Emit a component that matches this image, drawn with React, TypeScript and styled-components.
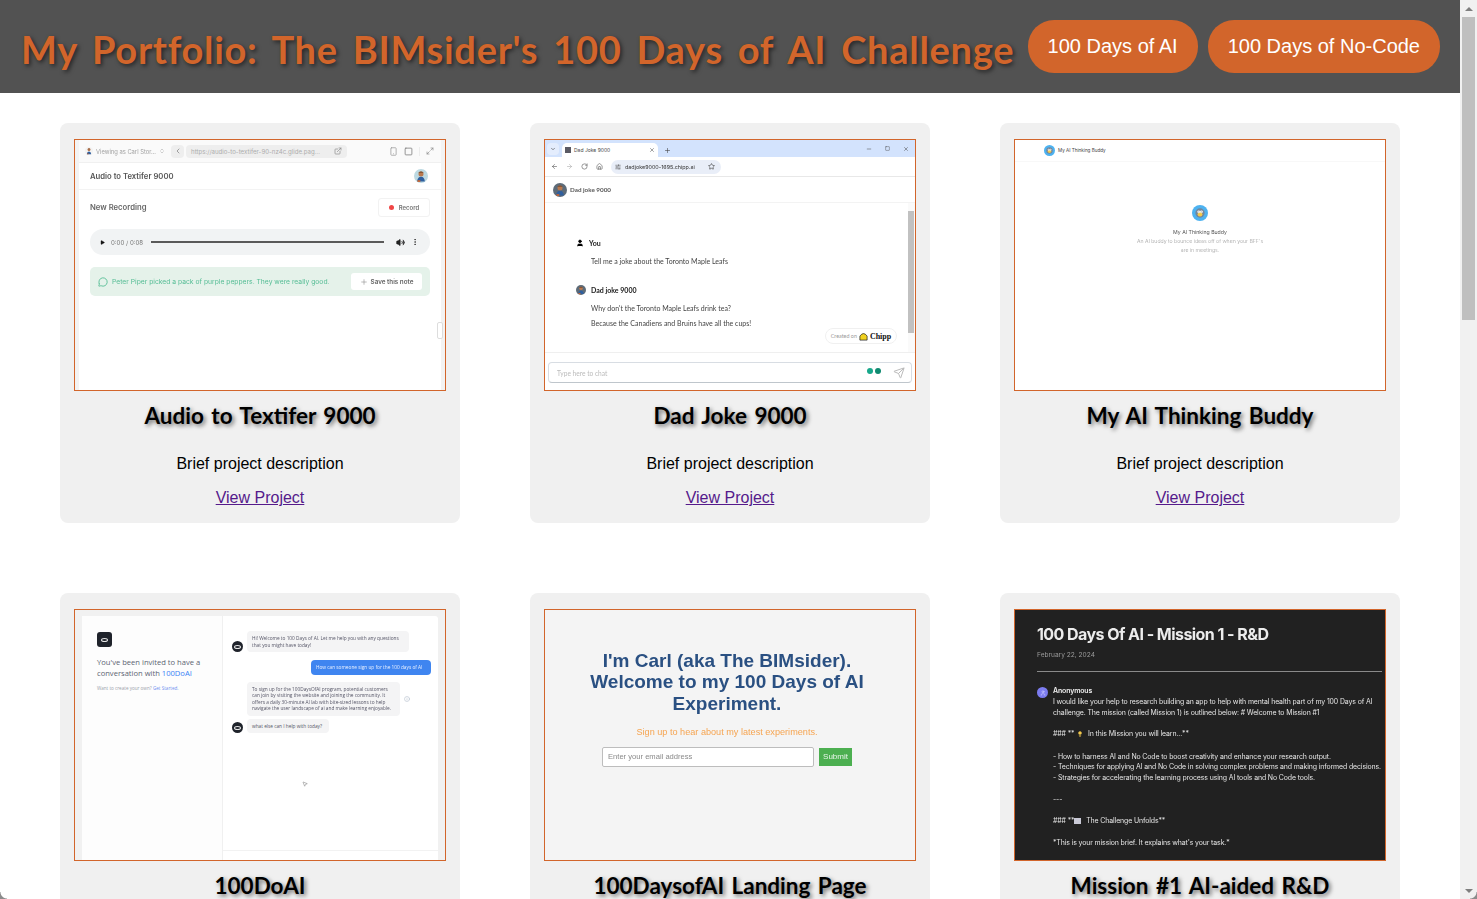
import React from "react";
import styled, { createGlobalStyle } from "styled-components";
import {
  ArrowLeft,
  ArrowRight,
  ChevronDown,
  ChevronLeft,
  ChevronsUpDown,
  ExternalLink,
  Home,
  Info,
  Lightbulb,
  Maximize2,
  MessageCircle,
  Minus,
  MoreVertical,
  MousePointer2,
  Play,
  Plus,
  RotateCw,
  Send,
  SlidersHorizontal,
  Smartphone,
  Square,
  Star,
  User,
  Volume2,
  X,
} from "lucide-react";

const ORANGE = "#d2652b";
const COMIC = `"Comic Sans MS", "Lato", "Open Sans", sans-serif`;
const ARIAL = `"Liberation Sans", Arial, sans-serif`;
const UI = `"Inter", "Liberation Sans", sans-serif`;

const GlobalStyle = createGlobalStyle`
  html, body {
    margin: 0;
    height: 100%;
    overflow: hidden;
    background: #fff;
    font-family: ${ARIAL};
  }
`;

const Shell = styled.div`
  display: flex;
  height: 899px;
  overflow: hidden;
  position: relative;
`;

const Page = styled.div`
  flex: 1;
  min-width: 0;
  overflow: hidden;
`;

const Header = styled.header`
  background: #525252;
  height: 93px;
  box-sizing: border-box;
  padding: 20px 20px 20px 21px;
  display: flex;
  align-items: center;
  justify-content: space-between;
`;

const Title = styled.h1`
  margin: 4px 0 0;
  font-family: ${COMIC};
  font-size: 38px;
  font-weight: 700;
  line-height: 46px;
  color: ${ORANGE};
  text-shadow: 2px 2px 4px rgba(0, 0, 0, 0.55);
  white-space: nowrap;
  letter-spacing: 0.72px;
  word-spacing: 5px;
`;

const Nav = styled.nav`
  display: flex;
  gap: 10px;
`;

const NavButton = styled.a`
  display: block;
  padding: 15px 20px;
  line-height: 23px;
  font-size: 20px;
  color: #fff;
  background: ${ORANGE};
  border-radius: 26px;
  white-space: nowrap;
`;

const Grid = styled.main`
  display: grid;
  grid-template-columns: repeat(3, 400px);
  gap: 70px;
  padding: 30px 60px;
`;

const Card = styled.article`
  background: #f0f0f0;
  border-radius: 8px;
  padding: 16px 14px 16px;
  text-align: center;
`;

const Thumb = styled.div<{ $bg?: string }>`
  height: 250px;
  border: 1px solid ${ORANGE};
  background: ${(p) => p.$bg || "#fff"};
  overflow: hidden;
  position: relative;
  text-align: left;
  font-family: ${UI};
  color: #444;
`;

const CardTitle = styled.h3`
  margin: 9px 0;
  font-family: ${COMIC};
  font-size: 22.5px;
  line-height: 32px;
  font-weight: 700;
  color: #000;
  text-shadow: 2px 2px 4px rgba(0, 0, 0, 0.55);
  word-spacing: 2px;
`;

const Description = styled.p`
  margin: 23px 0 16px;
  font-size: 16px;
  line-height: 18px;
  color: #000;
`;

const ProjectLink = styled.a`
  display: block;
  font-size: 16px;
  line-height: 18px;
  color: #551a8b;
  text-decoration: underline;
`;

/* scrollbar of the window, drawn since the shot has no native one */
const ScrollTrack = styled.div`
  width: 17px;
  flex: none;
  background: #f1f1f1;
  display: flex;
  flex-direction: column;
  align-items: center;
  padding: 0 2px;
  box-sizing: border-box;
`;

const ScrollArrow = styled.div<{ $down?: boolean }>`
  height: 17px;
  flex: none;
  display: flex;
  align-items: center;
  justify-content: center;
  margin-top: ${(p) => (p.$down ? "auto" : 0)};

  &::before {
    content: "";
    border-left: 4px solid transparent;
    border-right: 4px solid transparent;
    border-${(p) => (p.$down ? "top" : "bottom")}: 4px solid #7f7f7f;
  }
`;

const ScrollThumb = styled.div`
  width: 13px;
  height: 303px;
  background: #bfbfbf;
`;

const WindowCorner = styled.div<{ $right?: boolean }>`
  position: absolute;
  bottom: 0;
  ${(p) => (p.$right ? "right: 0" : "left: 0")};
  width: 7px;
  height: 7px;
  background: radial-gradient(
    circle at ${(p) => (p.$right ? "0 0" : "100% 0")},
    transparent 6px,
    #8c8c8c 7px
  );
`;

/* thumbnails: shared soft look of a scaled-down screenshot */
const Soft = styled.div<{ $amount?: number }>`
  height: 100%;
  filter: blur(${(p) => p.$amount ?? 0.35}px);
`;

const Avatar = ({ size, bg = "#9cc7d8" }: { size: number; bg?: string }) => (
  <svg width={size} height={size} viewBox="0 0 20 20" style={{ flex: "none" }}>
    <circle cx="10" cy="10" r="10" fill={bg} />
    <circle cx="10" cy="7" r="3.6" fill="#b9794f" />
    <path d="M6 5.5 Q10 1.5 14 5.5 Z" fill="#7a4a2a" />
    <path d="M4.5 18 Q5 11 10 11 Q15 11 15.5 18 Z" fill="#2f5f9e" />
    <path d="M5 16h4v2.4H5z" fill="#d2652b" />
  </svg>
);

/* ---- Audio to Textifer ---- */
const AudioFrame = styled.div`
  height: 100%;
  margin: 0 4px;
  background: #fff;
  box-shadow: 0 0 0 4px #f3f3f3;
`;

const AudioBar = styled.div`
  height: 23px;
  background: #fafafa;
  border-bottom: 1px solid #f0f0f0;
  box-sizing: border-box;
  display: flex;
  align-items: center;
  padding: 0 7px 0 6px;
  font-size: 5.8px;
  color: #a2a2a2;
  gap: 3px;
`;

const BackPill = styled.div`
  width: 13px;
  height: 13px;
  margin-left: 3px;
  border-radius: 4px;
  background: #eeeeee;
  display: flex;
  align-items: center;
  justify-content: center;
`;

const UrlPill = styled.div`
  width: 161px;
  height: 13px;
  margin-left: -1px;
  padding: 0 5px;
  box-sizing: border-box;
  border-radius: 4px;
  background: #eeeeee;
  display: flex;
  align-items: center;
  justify-content: space-between;
  color: #adadad;
  font-size: 6.1px;
  white-space: nowrap;
`;

const BarIcons = styled.div`
  margin-left: auto;
  display: flex;
  align-items: center;
  gap: 6px;
`;

const BarDivider = styled.span`
  width: 1px;
  height: 9px;
  background: #ececec;
`;

const AudioAppTitle = styled.div`
  height: 27px;
  border-bottom: 1px solid #f3f3f3;
  box-sizing: border-box;
  padding: 0 13px 0 11px;
  display: flex;
  align-items: center;
  justify-content: space-between;
  font-size: 7.7px;
  font-weight: 600;
  color: #555;
`;

const RecordingRow = styled.div`
  display: flex;
  align-items: center;
  justify-content: space-between;
  padding: 8px 11px 0;
  font-size: 7.7px;
  font-weight: 600;
  color: #666;
`;

const RecordButton = styled.div`
  width: 52px;
  height: 19px;
  box-sizing: border-box;
  border: 1px solid #f2f2f2;
  border-radius: 3px;
  display: flex;
  align-items: center;
  justify-content: center;
  gap: 5px;
  font-size: 6px;
  color: #777;

  &::before {
    content: "";
    width: 5px;
    height: 5px;
    border-radius: 50%;
    background: #f04646;
  }
`;

const Player = styled.div`
  height: 26px;
  margin: 12px 11px 0;
  padding: 0 11px 0 10px;
  border-radius: 13px;
  background: #f1f3f4;
  display: flex;
  align-items: center;
  gap: 6px;
  font-size: 6.1px;
  color: #777;
`;

const PlayerTrack = styled.div`
  flex: 1;
  height: 1.6px;
  margin: 0 6px 0 2px;
  background: #5a5a5a;
`;

const NoteRow = styled.div`
  height: 29px;
  margin: 12px 11px 0;
  padding: 0 8px;
  border-radius: 5px;
  background: #e5f2ea;
  display: flex;
  align-items: center;
  gap: 3px;
  font-size: 6.75px;
  color: #55bd95;
  white-space: nowrap;
`;

const SaveNote = styled.div`
  margin-left: auto;
  width: 71px;
  height: 17px;
  flex: none;
  border-radius: 3px;
  background: #fff;
  display: flex;
  align-items: center;
  justify-content: center;
  gap: 3px;
  font-size: 6.3px;
  font-weight: 600;
  color: #666;
`;

const ResizeHandle = styled.div`
  position: absolute;
  right: 2px;
  top: 182px;
  width: 4px;
  height: 15px;
  border-radius: 2px;
  background: #fff;
  border: 0.5px solid #ddd;
`;

const AudioThumb = () => (
  <Soft>
    <AudioFrame>
      <AudioBar>
        <Avatar size={8} bg="#f3f3f3" />
        <span>Viewing as Carl Stor...</span>
        <ChevronsUpDown size={6} />
        <BackPill>
          <ChevronLeft size={8} color="#777" />
        </BackPill>
        <UrlPill>
          https://audio-to-textifer-90-nz4c.glide.pag...
          <ExternalLink size={8} color="#888" />
        </UrlPill>
        <BarIcons>
          <Smartphone size={9} color="#9a9a9a" />
          <Square size={9} color="#777" />
          <BarDivider />
          <Maximize2 size={8} color="#888" />
        </BarIcons>
      </AudioBar>
      <AudioAppTitle>
        Audio to Textifer 9000
        <Avatar size={14} bg="#bcd9e2" />
      </AudioAppTitle>
      <RecordingRow>
        New Recording
        <RecordButton>Record</RecordButton>
      </RecordingRow>
      <Player>
        <Play size={5} fill="#111" color="#111" />
        <span>0:00 / 0:08</span>
        <PlayerTrack />
        <Volume2 size={9} color="#222" fill="#222" />
        <MoreVertical size={8} color="#222" />
      </Player>
      <NoteRow>
        <MessageCircle size={10} color="#4cbb8f" style={{ marginRight: 1, flex: "none" }} />
        Peter Piper picked a pack of purple peppers. They were really good.
        <SaveNote>
          <Plus size={8} color="#999" />
          Save this note
        </SaveNote>
      </NoteRow>
    </AudioFrame>
    <ResizeHandle />
  </Soft>
);

/* ---- Dad Joke ---- */
const TabStrip = styled.div`
  height: 17px;
  background: #d3e3fd;
  display: flex;
  align-items: flex-end;
  font-size: 5px;
  color: #444;
  padding-left: 2px;
`;

const TabMenu = styled.div`
  width: 12px;
  height: 12px;
  margin: 0 3px 2px 0;
  border-radius: 4px;
  background: #e4edfd;
  display: flex;
  align-items: center;
  justify-content: center;
`;

const Tab = styled.div`
  width: 96px;
  height: 14px;
  box-sizing: border-box;
  padding: 0 3px;
  border-radius: 5px 5px 0 0;
  background: #fff;
  display: flex;
  align-items: center;
  gap: 3px;

  & > svg:last-child {
    margin-left: auto;
  }
`;

const Favicon = styled.span`
  width: 6px;
  height: 6px;
  background: #5a5a64;
`;

const WindowButtons = styled.div`
  margin-left: auto;
  display: flex;
  align-self: center;
  gap: 13px;
  padding-right: 6px;
`;

const ChromeBar = styled.div`
  height: 20px;
  box-sizing: border-box;
  border-bottom: 1px solid #e8e8e8;
  display: flex;
  align-items: center;
  gap: 8px;
  padding-left: 6px;
`;

const OmniBox = styled.div`
  width: 110px;
  height: 14px;
  padding: 0 6px 0 4px;
  box-sizing: border-box;
  border-radius: 7px;
  background: #e9eef8;
  display: flex;
  align-items: center;
  gap: 4px;
  font-size: 5.4px;
  color: #333;
  white-space: nowrap;

  & > svg:last-child {
    margin-left: auto;
  }
`;

const ChatHeader = styled.div`
  height: 26px;
  border-bottom: 1px solid #f3f3f3;
  box-sizing: border-box;
  display: flex;
  align-items: center;
  gap: 3px;
  padding-left: 8px;
  font-family: "Lato", sans-serif;
  font-size: 6.3px;
  font-weight: 700;
  color: #555;
`;

const ChatMiddle = styled.div`
  height: 150px;
  display: flex;
  border-bottom: 1px solid #efefef;
  box-sizing: border-box;
`;

const Transcript = styled.div`
  flex: 1;
  padding: 35px 0 0 31px;
  font-family: "Lato", sans-serif;
  font-size: 7px;
  color: #444;
`;

const Speaker = styled.div<{ $gap?: number }>`
  display: flex;
  align-items: center;
  gap: 5px;
  font-weight: 700;
  color: #222;
  height: 10px;
  margin-bottom: 9px;
  margin-top: ${(p) => p.$gap ?? 0}px;
`;

const Line = styled.div`
  height: 8px;
  line-height: 8px;
  margin: 0 0 7px 15px;
`;

const MiniScroll = styled.div`
  width: 7px;
  display: flex;
  flex-direction: column;
  padding: 8px 1px 7px 0;
  box-sizing: border-box;
  background: #fafafa;
`;

const MiniThumb = styled.div`
  height: 122px;
  background: #c1c1c1;
`;

const ChippBadge = styled.div`
  position: absolute;
  left: 280px;
  top: 188px;
  width: 72px;
  height: 16px;
  box-sizing: border-box;
  border: 1px solid #f0f0f0;
  border-radius: 8px;
  background: #fff;
  display: flex;
  align-items: center;
  justify-content: center;
  gap: 2px;
  font-family: "Lato", sans-serif;
  font-size: 5.4px;
  color: #999;

  & b {
    font-family: "Liberation Serif", serif;
    font-size: 8px;
    color: #111;
  }
`;

const ChatInput = styled.div`
  margin: 9px 3px 0;
  height: 21px;
  box-sizing: border-box;
  border: 1px solid #d8dde3;
  border-bottom-color: #bfc6cc;
  border-radius: 4px;
  padding: 0 6px 0 8px;
  display: flex;
  align-items: center;
  font-family: "Lato", sans-serif;
  font-size: 6.6px;
  color: #bbb;
`;

const GrammarDot = styled.span<{ $color: string; $first?: boolean }>`
  width: 6px;
  height: 6px;
  margin: -3px 0 0 ${(p) => (p.$first ? "auto" : "2px")};
  border-radius: 50%;
  background: ${(p) => p.$color};
`;

const DadJokeThumb = () => (
  <Soft>
    <TabStrip>
      <TabMenu>
        <ChevronDown size={6} color="#222" />
      </TabMenu>
      <Tab>
        <Favicon />
        Dad Joke 9000
        <X size={6} color="#444" />
      </Tab>
      <Plus size={7} color="#444" style={{ margin: "0 0 3px 6px" }} />
      <WindowButtons>
        <Minus size={6} color="#444" />
        <Square size={5} color="#444" />
        <X size={6} color="#444" />
      </WindowButtons>
    </TabStrip>
    <ChromeBar>
      <ArrowLeft size={7} color="#555" />
      <ArrowRight size={7} color="#aaa" />
      <RotateCw size={7} color="#555" />
      <Home size={7} color="#555" />
      <OmniBox>
        <SlidersHorizontal size={6} color="#444" />
        dadjoke9000-1695.chipp.ai
        <Star size={7} color="#333" />
      </OmniBox>
    </ChromeBar>
    <ChatHeader>
      <Avatar size={14} bg="#5d6b78" />
      Dad joke 9000
    </ChatHeader>
    <ChatMiddle>
      <Transcript>
        <Speaker>
          <User size={8} color="#000" fill="#000" />
          You
        </Speaker>
        <Line>Tell me a joke about the Toronto Maple Leafs</Line>
        <Speaker $gap={20}>
          <Avatar size={10} bg="#5d6b78" />
          Dad joke 9000
        </Speaker>
        <Line>Why don't the Toronto Maple Leafs drink tea?</Line>
        <Line>Because the Canadiens and Bruins have all the cups!</Line>
      </Transcript>
      <MiniScroll>
        <MiniThumb />
      </MiniScroll>
    </ChatMiddle>
    <ChippBadge>
      Created on
      <svg width="9" height="9" viewBox="0 0 10 10">
        <path d="M1 4.5 Q5 -1 9 4.5 L9 9 L1 9 Z" fill="#f1d21f" stroke="#222" strokeWidth="0.8" />
      </svg>
      <b>Chipp</b>
    </ChippBadge>
    <ChatInput>
      Type here to chat
      <GrammarDot $color="#18a88b" $first />
      <GrammarDot $color="#0f8a70" />
      <Send size={12} color="#bbb" style={{ marginLeft: 12 }} />
    </ChatInput>
  </Soft>
);

/* ---- AI Thinking Buddy ---- */
const BuddyHeader = styled.div`
  height: 22px;
  background: #fff;
  border-bottom: 1px solid #f8f8f8;
  box-sizing: border-box;
  padding-left: 29px;
  display: flex;
  align-items: center;
  gap: 3px;
  font-size: 4.6px;
  color: #444;
`;

const BuddyLogo = ({ size }: { size: number }) => (
  <svg width={size} height={size} viewBox="0 0 20 20" style={{ flex: "none" }}>
    <circle cx="10" cy="10" r="10" fill="#4db2f0" />
    <circle cx="10" cy="10" r="5.8" fill="#74869a" />
    <circle cx="10" cy="11.5" r="3" fill="#f2c94c" />
    <circle cx="8.4" cy="8.5" r="1.7" fill="#fff" />
    <circle cx="11.8" cy="8.5" r="1.7" fill="#fff" />
    <circle cx="8.6" cy="8.6" r="0.6" fill="#222" />
    <circle cx="11.6" cy="8.6" r="0.6" fill="#222" />
  </svg>
);

const BuddyCenter = styled.div`
  display: flex;
  flex-direction: column;
  align-items: center;
  padding-top: 43px;
  font-size: 5.2px;
  color: #555;
  text-align: center;
`;

const BuddyName = styled.div`
  margin-top: 7px;
  height: 9px;
  line-height: 9px;
`;

const BuddyBlurb = styled.div`
  width: 132px;
  font-size: 5.2px;
  font-weight: 300;
  line-height: 8.6px;
  color: #a0a0a0;
`;

const BuddyThumb = () => (
  <Soft $amount={0.25}>
    <BuddyHeader>
      <BuddyLogo size={11} />
      My AI Thinking Buddy
    </BuddyHeader>
    <BuddyCenter>
      <BuddyLogo size={16} />
      <BuddyName>My AI Thinking Buddy</BuddyName>
      <BuddyBlurb>An AI buddy to bounce ideas off of when your BFF's are in meetings.</BuddyBlurb>
    </BuddyCenter>
  </Soft>
);

/* ---- 100DoAI ---- */
const DoAIWindow = styled.div`
  display: flex;
  height: 100%;
  margin: 6px 7px 0;
  background: #fff;
  border-radius: 3px 3px 0 0;
  font-family: "Open Sans", sans-serif;
`;

const InvitePane = styled.div`
  width: 141px;
  box-sizing: border-box;
  padding: 16px 0 0 15px;
  background: #fdfdfd;
  border-right: 1px solid #f0f0f0;
  color: #5c6472;
`;

const DoAILogo = styled.div`
  width: 15px;
  height: 15px;
  border-radius: 3px;
  background: #1f232b;
  display: flex;
  align-items: center;
  justify-content: center;
  margin-bottom: 10px;
`;

const InviteText = styled.div`
  width: 118px;
  font-size: 7.6px;
  line-height: 11px;

  & b {
    font-weight: 400;
    color: #3b82f6;
  }
`;

const InviteSmall = styled.div`
  margin-top: 6px;
  font-size: 4.6px;
  line-height: 6px;
  color: #9aa1ab;
  white-space: nowrap;

  & b {
    font-weight: 400;
    color: #6d8ff0;
  }
`;

const ConversationPane = styled.div`
  flex: 1;
  position: relative;
  padding: 15px 7px 0 9px;
  font-size: 4.75px;
  line-height: 6.5px;
  color: #556;
`;

const MessageRow = styled.div<{ $mine?: boolean; $gap?: number }>`
  display: flex;
  align-items: flex-end;
  gap: 4px;
  justify-content: ${(p) => (p.$mine ? "flex-end" : "flex-start")};
  margin-top: ${(p) => p.$gap ?? 0}px;
`;

const Bubble = styled.div<{ $width: number; $mine?: boolean; $indent?: boolean; $single?: boolean }>`
  width: ${(p) => p.$width}px;
  box-sizing: border-box;
  padding: 4px 5px;
  margin-left: ${(p) => (p.$indent ? 15 : 0)}px;
  border-radius: 4px;
  background: ${(p) => (p.$mine ? "#3f85f0" : "#f4f4f5")};
  color: ${(p) => (p.$mine ? "#e8f0ff" : "#556")};
  white-space: ${(p) => (p.$mine || p.$single ? "nowrap" : "normal")};
`;

const Dot = styled.div`
  width: 11px;
  height: 11px;
  flex: none;
  border-radius: 50%;
  background: #1f232b;
  display: flex;
  align-items: center;
  justify-content: center;
`;

const EyeMark = styled.span`
  width: 7px;
  height: 4px;
  border: 0.7px solid #e8e8e8;
  border-radius: 50%;
  box-sizing: border-box;
`;

const ComposerLine = styled.div`
  position: absolute;
  left: 0;
  right: 0;
  top: 234px;
  border-top: 1px solid #f2f2f2;
`;

const CursorMark = styled.div`
  position: absolute;
  left: 79px;
  top: 165px;
`;

const DoAIThumb = () => (
  <Soft $amount={0.3}>
    <DoAIWindow>
      <InvitePane>
        <DoAILogo>
          <EyeMark />
        </DoAILogo>
        <InviteText>
          You've been invited to have a conversation with <b>100DoAI</b>
        </InviteText>
        <InviteSmall>
          Want to create your own? <b>Get Started.</b>
        </InviteSmall>
      </InvitePane>
      <ConversationPane>
        <MessageRow>
          <Dot>
            <EyeMark />
          </Dot>
          <Bubble $width={162}>
            Hi! Welcome to 100 Days of AI. Let me help you with any questions that you might have today!
          </Bubble>
        </MessageRow>
        <MessageRow $mine $gap={8}>
          <Bubble $width={120} $mine>
            How can someone sign up for the 100 days of AI
          </Bubble>
        </MessageRow>
        <MessageRow $gap={7}>
          <Bubble $width={153} $indent>
            To sign up for the 100DaysOfAI program, potential customers can join by visiting the website and joining the community. It offers a daily 30-minute AI lab with bite-sized lessons to help navigate the user landscape of ai and make learning enjoyable.
          </Bubble>
          <Info size={6} color="#a9b4c4" style={{ alignSelf: "center" }} />
        </MessageRow>
        <MessageRow $gap={3}>
          <Dot>
            <EyeMark />
          </Dot>
          <Bubble $width={82} $single>
            what else can I help with today?
          </Bubble>
        </MessageRow>
        <CursorMark>
          <MousePointer2 size={6} color="#777" fill="#fff" />
        </CursorMark>
        <ComposerLine />
      </ConversationPane>
    </DoAIWindow>
  </Soft>
);

/* ---- Landing page ---- */
const Landing = styled.div`
  height: 100%;
  display: flex;
  flex-direction: column;
  align-items: center;
  padding: 40px 6px 0 0;
  box-sizing: border-box;
  font-family: ${ARIAL};
`;

const LandingHead = styled.div`
  width: 290px;
  font-size: 19px;
  line-height: 21.4px;
  font-weight: 700;
  color: #2a5082;
  text-align: center;
`;

const LandingSub = styled.div`
  margin-top: 12px;
  font-size: 9.15px;
  line-height: 12px;
  color: #f6a552;
`;

const LandingForm = styled.div`
  display: flex;
  align-items: center;
  gap: 5px;
  margin-top: 9px;
`;

const EmailBox = styled.div`
  width: 212px;
  height: 20px;
  box-sizing: border-box;
  padding-left: 5px;
  background: #fff;
  border: 1px solid #bdbdbd;
  border-radius: 2px;
  font-size: 7.6px;
  line-height: 18px;
  color: #8a8a8a;
`;

const SubmitBox = styled.div`
  width: 33px;
  height: 18px;
  background: #4caf50;
  color: #e9f6ea;
  font-size: 8px;
  line-height: 18px;
  text-align: center;
`;

const LandingThumb = () => (
  <Soft $amount={0.2}>
    <Landing>
      <LandingHead>I'm Carl (aka The BIMsider). Welcome to my 100 Days of AI Experiment.</LandingHead>
      <LandingSub>Sign up to hear about my latest experiments.</LandingSub>
      <LandingForm>
        <EmailBox>Enter your email address</EmailBox>
        <SubmitBox>Submit</SubmitBox>
      </LandingForm>
    </Landing>
  </Soft>
);

/* ---- Mission ---- */
const MissionDoc = styled.div`
  height: 100%;
  box-sizing: border-box;
  padding: 14px 3px 0 22px;
  color: #e4e4e4;
`;

const MissionTitle = styled.div`
  font-size: 16px;
  line-height: 20px;
  font-weight: 700;
  letter-spacing: -0.55px;
  color: #ececec;
`;

const MissionDate = styled.div`
  margin-top: 7px;
  font-size: 6.6px;
  line-height: 8px;
  color: #9b9b9b;
`;

const MissionRule = styled.div`
  margin-top: 12px;
  height: 1px;
  background: #8a8a8a;
`;

const MissionMessage = styled.div`
  display: flex;
  gap: 5px;
  margin-top: 15px;
`;

const AnonDot = styled.div`
  width: 11px;
  height: 11px;
  flex: none;
  border-radius: 50%;
  background: #7c7cf0;
  display: flex;
  align-items: center;
  justify-content: center;
`;

const MissionText = styled.div`
  font-size: 6.93px;
  line-height: 10.75px;
  white-space: pre;
  letter-spacing: -0.11px;
  margin-top: -1px;

  & b {
    font-weight: 600;
    color: #f0f0f0;
  }
`;

const InlineEmoji = styled.span`
  display: inline-block;
  vertical-align: -1px;
  margin: 0 3px 0 1px;
`;

const NewsBox = styled.span`
  display: inline-block;
  width: 7px;
  height: 6px;
  margin: 0 3px 0 0;
  vertical-align: -1px;
  background: #c9c9d6;
`;

const MissionThumb = () => (
  <Soft $amount={0.2}>
    <MissionDoc>
      <MissionTitle>100 Days Of AI - Mission 1 - R&amp;D</MissionTitle>
      <MissionDate>February 22, 2024</MissionDate>
      <MissionRule />
      <MissionMessage>
        <AnonDot>
          <User size={6} color="#dcdcff" />
        </AnonDot>
        <MissionText>
          <b>Anonymous</b>
          {"\nI would like your help to research building an app to help with mental health part of my 100 Days of AI"}
          {"\nchallenge. The mission (called Mission 1) is outlined below: # Welcome to Mission #1"}
          {"\n\n### ** "}
          <InlineEmoji>
            <Lightbulb size={6} color="#f2c94c" fill="#f2c94c" />
          </InlineEmoji>
          {" In this Mission you will learn...**"}
          {"\n\n- How to harness AI and No Code to boost creativity and enhance your research output."}
          {"\n- Techniques for applying AI and No Code in solving complex problems and making informed decisions."}
          {"\n- Strategies for accelerating the learning process using AI tools and No Code tools."}
          {"\n\n---"}
          {"\n\n### **"}
          <NewsBox />
          {" The Challenge Unfolds**"}
          {"\n\n*This is your mission brief. It explains what's your task.*"}
        </MissionText>
      </MissionMessage>
    </MissionDoc>
  </Soft>
);

const projects = [
  { title: "Audio to Textifer 9000", thumb: <AudioThumb /> },
  { title: "Dad Joke 9000", thumb: <DadJokeThumb /> },
  { title: "My AI Thinking Buddy", thumb: <BuddyThumb /> },
  { title: "100DoAI", thumb: <DoAIThumb />, bg: "#f1f1f1" },
  { title: "100DaysofAI Landing Page", thumb: <LandingThumb />, bg: "#f4f4f4" },
  { title: "Mission #1 AI-aided R&D", thumb: <MissionThumb />, bg: "#212121" },
];

const App = () => (
  <Shell>
    <GlobalStyle />
    <Page>
      <Header>
        <Title>My Portfolio: The BIMsider's 100 Days of AI Challenge</Title>
        <Nav>
          <NavButton>100 Days of AI</NavButton>
          <NavButton>100 Days of No-Code</NavButton>
        </Nav>
      </Header>
      <Grid>
        {projects.map((p) => (
          <Card key={p.title}>
            <Thumb $bg={p.bg}>{p.thumb}</Thumb>
            <CardTitle>{p.title}</CardTitle>
            <Description>Brief project description</Description>
            <ProjectLink href="#">View Project</ProjectLink>
          </Card>
        ))}
      </Grid>
    </Page>
    <ScrollTrack>
      <ScrollArrow />
      <ScrollThumb />
      <ScrollArrow $down />
    </ScrollTrack>
    <WindowCorner />
    <WindowCorner $right />
  </Shell>
);

export default App;
